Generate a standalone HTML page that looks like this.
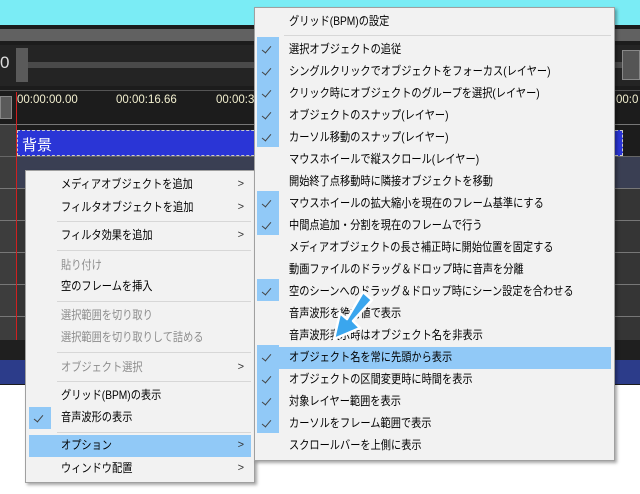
<!DOCTYPE html><html><head><meta charset="utf-8"><style>
*{margin:0;padding:0;box-sizing:border-box}
body{width:640px;height:494px;overflow:hidden;background:#fff;position:relative;font-family:"Liberation Sans","Noto Sans CJK JP",sans-serif;font-size:12px;color:#000}
.a{position:absolute}
.menu{position:absolute;background:#f2f2f2;border:1px solid #a0a0a0;box-shadow:2px 2px 3px rgba(0,0,0,.35)}
.it{position:absolute;left:0;right:0;height:22px;line-height:22px}
.it span{position:absolute;white-space:nowrap;transform:scaleX(.85);transform-origin:0 50%}
.it span.arr,.it span.ckm{transform:none}
.sep{position:absolute;height:1px;background:#d7d7d7}
.ck{position:absolute;background:#91c9f7;width:22px}
.ckm{position:absolute;width:22px;height:22px}
.ckm::after{content:"";position:absolute;left:7px;top:6px;width:4px;height:8px;border:solid #444;border-width:0 1.5px 1.5px 0;transform:rotate(40deg)}
.arr{position:absolute;right:10px;color:#333;font-size:11px}
.dis{color:#8d8d8d}
.hl{background:#91c9f7}
</style></head><body>
<div class="a" style="left:0;top:0;width:640px;height:25px;background:#7aecf5"></div>
<div class="a" style="left:0;top:25px;width:640px;height:360px;background:#1c1c1c"></div>
<div class="a" style="left:0;top:29px;width:640px;height:12px;background:#616161"></div>
<div class="a" style="left:0;top:45px;width:640px;height:41px;background:#242424"></div>
<div class="a" style="left:28px;top:62px;width:600px;height:6px;background:#4a4a4a"></div>
<div class="a" style="left:16px;top:48px;width:12px;height:34px;background:#5a5a5a"></div>
<div class="a" style="left:0;top:53px;color:#ddd;font-size:17px">0</div>
<div class="a" style="left:0;top:90px;width:640px;height:1px;background:#555"></div>
<div class="a" style="left:0;top:96px;width:12px;height:23px;background:#5a5a5a;border:1px solid #888"></div>
<div class="a" style="left:17px;top:94px;color:#f3f0d0;font-size:11.5px">00:00:00.00</div>
<div class="a" style="left:116px;top:94px;color:#f3f0d0;font-size:11.5px">00:00:16.66</div>
<div class="a" style="left:216px;top:94px;color:#f3f0d0;font-size:11.5px">00:00:3</div>
<div class="a" style="left:616px;top:94px;color:#f3f0d0;font-size:11.5px">00:0</div>
<div class="a" style="left:0;top:124px;width:640px;height:1px;background:#777"></div>
<div class="a" style="left:0;top:125px;width:16px;height:215px;background:#3d3d3d"></div>
<div class="a" style="left:17px;top:130px;width:606px;height:26px;background:#2a35d6;border:1px dashed #ccc"></div>
<div class="a" style="left:22px;top:134px;color:#fff;font-size:15px">背景</div>
<div class="a" style="left:16px;top:157px;width:624px;height:31px;background:#3a3f53"></div>
<div class="a" style="left:16px;top:188px;width:624px;height:152px;background:#353535"></div>
<div class="a" style="left:0;top:156px;width:640px;height:1px;background:#666"></div>
<div class="a" style="left:0;top:188px;width:640px;height:1px;background:#777"></div>
<div class="a" style="left:0;top:220px;width:640px;height:1px;background:#777"></div>
<div class="a" style="left:0;top:252px;width:640px;height:1px;background:#777"></div>
<div class="a" style="left:0;top:284px;width:640px;height:1px;background:#777"></div>
<div class="a" style="left:0;top:316px;width:640px;height:1px;background:#777"></div>
<div class="a" style="left:16px;top:92px;width:1px;height:248px;background:#d02020"></div>
<div class="a" style="left:0;top:340px;width:640px;height:20px;background:#1f1f1f"></div>
<div class="a" style="left:0;top:360px;width:640px;height:24px;background:#2c3c8a"></div>
<div class="a" style="left:622px;top:50px;width:18px;height:30px;background:#555;border:1px solid #888"></div>

<div class="menu" style="left:25px;top:170px;width:230px;height:313px">
<div class="ck" style="left:3px;top:236px;height:22px"></div><div class="ckm" style="left:3px;top:236px"></div>
<div class="it hl" style="left:3px;right:3px;top:264px"></div>
<div class="it" style="top:2px"><span style="left:35px">メディアオブジェクトを追加</span><span class="arr">&gt;</span></div>
<div class="it" style="top:25px"><span style="left:35px">フィルタオブジェクトを追加</span><span class="arr">&gt;</span></div>
<div class="sep" style="left:31px;right:3px;top:50px"></div>
<div class="it" style="top:53px"><span style="left:35px">フィルタ効果を追加</span><span class="arr">&gt;</span></div>
<div class="sep" style="left:31px;right:3px;top:79px"></div>
<div class="it dis" style="top:83px"><span style="left:35px">貼り付け</span></div>
<div class="it" style="top:104px"><span style="left:35px">空のフレームを挿入</span></div>
<div class="sep" style="left:31px;right:3px;top:130px"></div>
<div class="it dis" style="top:133px"><span style="left:35px">選択範囲を切り取り</span></div>
<div class="it dis" style="top:155px"><span style="left:35px">選択範囲を切り取りして詰める</span></div>
<div class="sep" style="left:31px;right:3px;top:181px"></div>
<div class="it dis" style="top:185px"><span style="left:35px">オブジェクト選択</span><span class="arr">&gt;</span></div>
<div class="sep" style="left:31px;right:3px;top:210px"></div>
<div class="it" style="top:213px"><span style="left:35px">グリッド(BPM)の表示</span></div>
<div class="it" style="top:235px"><span style="left:35px">音声波形の表示</span></div>
<div class="sep" style="left:31px;right:3px;top:261px"></div>
<div class="it" style="top:263px"><span style="left:35px">オプション</span><span class="arr">&gt;</span></div>
<div class="it" style="top:286px"><span style="left:35px">ウィンドウ配置</span><span class="arr">&gt;</span></div>
</div>

<div class="menu" style="left:254px;top:7px;width:361px;height:454px">
<div class="ck" style="left:2px;top:29px;height:110px"></div>
<div class="ck" style="left:2px;top:183px;height:44px"></div>
<div class="ck" style="left:2px;top:271px;height:22px"></div>
<div class="ck" style="left:2px;top:337px;height:88px"></div>
<div class="it hl" style="left:2px;right:3px;top:339px"></div>
<div class="it" style="top:2px"><span style="left:34px">グリッド(BPM)の設定</span></div>
<div class="sep" style="left:29px;right:3px;top:27px"></div>
<div class="it" style="top:30px"><span class="ckm" style="left:2px;top:0"></span><span style="left:34px">選択オブジェクトの追従</span></div>
<div class="it" style="top:52px"><span class="ckm" style="left:2px;top:0"></span><span style="left:34px">シングルクリックでオブジェクトをフォーカス(レイヤー)</span></div>
<div class="it" style="top:74px"><span class="ckm" style="left:2px;top:0"></span><span style="left:34px">クリック時にオブジェクトのグループを選択(レイヤー)</span></div>
<div class="it" style="top:96px"><span class="ckm" style="left:2px;top:0"></span><span style="left:34px">オブジェクトのスナップ(レイヤー)</span></div>
<div class="it" style="top:118px"><span class="ckm" style="left:2px;top:0"></span><span style="left:34px">カーソル移動のスナップ(レイヤー)</span></div>
<div class="it" style="top:140px"><span style="left:34px">マウスホイールで縦スクロール(レイヤー)</span></div>
<div class="it" style="top:162px"><span style="left:34px">開始終了点移動時に隣接オブジェクトを移動</span></div>
<div class="it" style="top:184px"><span class="ckm" style="left:2px;top:0"></span><span style="left:34px">マウスホイールの拡大縮小を現在のフレーム基準にする</span></div>
<div class="it" style="top:206px"><span class="ckm" style="left:2px;top:0"></span><span style="left:34px">中間点追加・分割を現在のフレームで行う</span></div>
<div class="it" style="top:228px"><span style="left:34px">メディアオブジェクトの長さ補正時に開始位置を固定する</span></div>
<div class="it" style="top:250px"><span style="left:34px">動画ファイルのドラッグ＆ドロップ時に音声を分離</span></div>
<div class="it" style="top:272px"><span class="ckm" style="left:2px;top:0"></span><span style="left:34px">空のシーンへのドラッグ＆ドロップ時にシーン設定を合わせる</span></div>
<div class="it" style="top:294px"><span style="left:34px">音声波形を絶対値で表示</span></div>
<div class="it" style="top:316px"><span style="left:34px">音声波形表示時はオブジェクト名を非表示</span></div>
<div class="it" style="top:338px"><span class="ckm" style="left:2px;top:0"></span><span style="left:34px">オブジェクト名を常に先頭から表示</span></div>
<div class="it" style="top:360px"><span class="ckm" style="left:2px;top:0"></span><span style="left:34px">オブジェクトの区間変更時に時間を表示</span></div>
<div class="it" style="top:382px"><span class="ckm" style="left:2px;top:0"></span><span style="left:34px">対象レイヤー範囲を表示</span></div>
<div class="it" style="top:404px"><span class="ckm" style="left:2px;top:0"></span><span style="left:34px">カーソルをフレーム範囲で表示</span></div>
<div class="it" style="top:426px"><span style="left:34px">スクロールバーを上側に表示</span></div>
</div>

<svg class="a" style="left:325px;top:288px" width="52" height="58" viewBox="0 0 52 58">
<path d="M38 4 L47 12 L28 33 L35 40 L9 51 L15 25 L22 31 Z" fill="#3aa6ee" stroke="#fff" stroke-width="2.5" stroke-linejoin="round"/>
</svg>
</body></html>
